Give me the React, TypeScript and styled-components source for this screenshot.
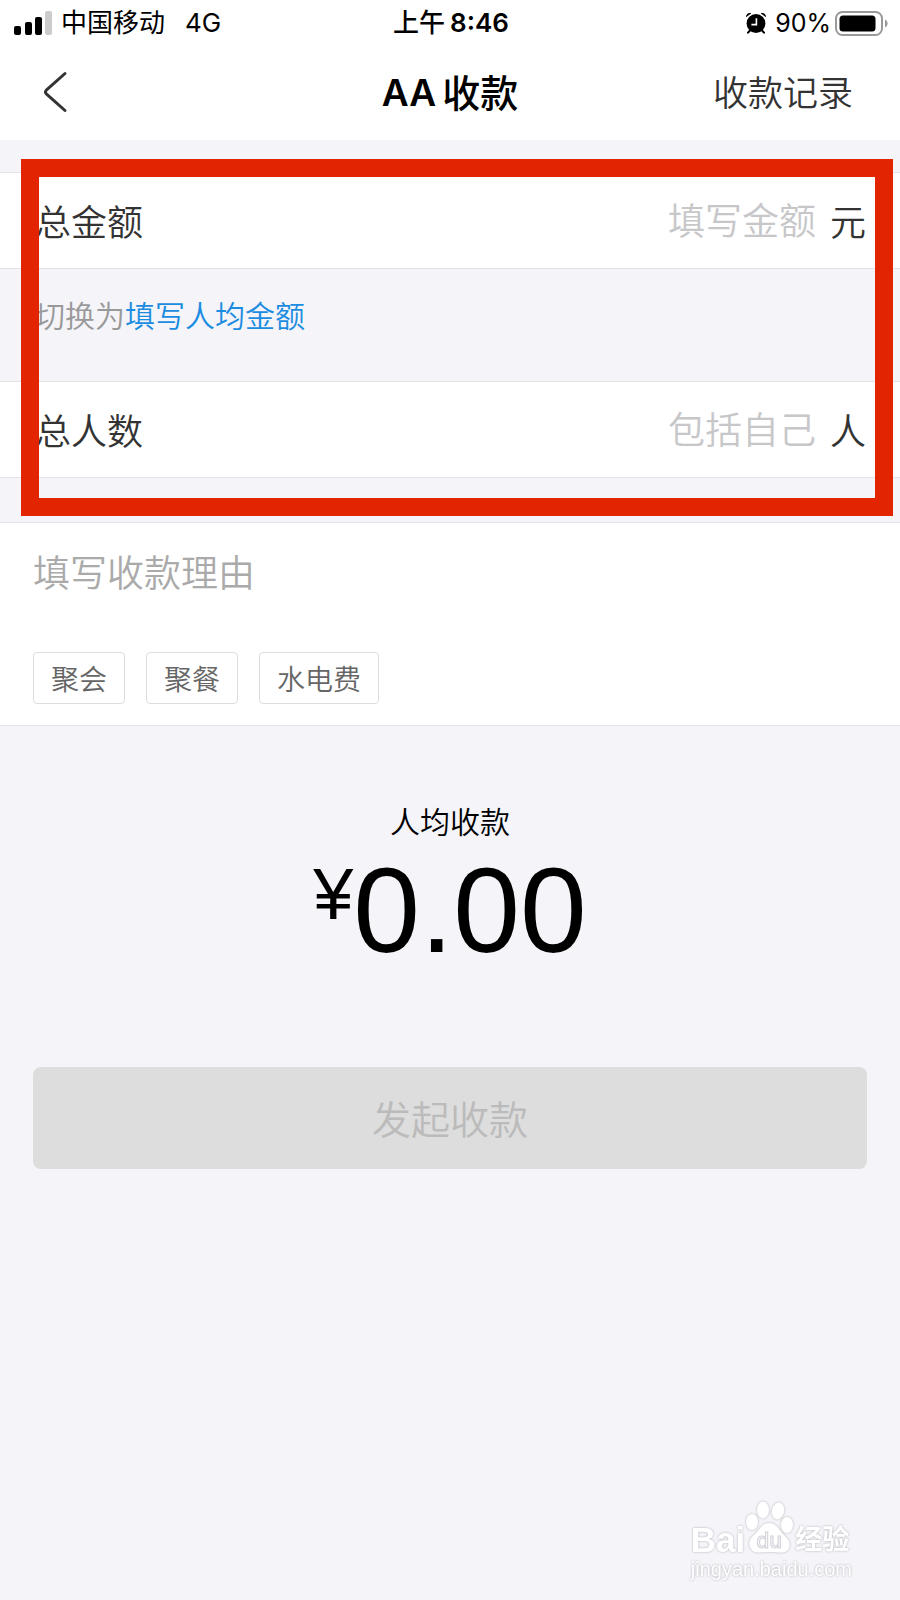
import React, { useState } from "react";
import styled, { createGlobalStyle } from "styled-components";

const GlobalStyle = createGlobalStyle`
  *, *::before, *::after { box-sizing: border-box; }
  body {
    margin: 0;
    background: #f4f4f9;
    color: #000;
    font-family: Inter, "Noto Sans CJK SC", sans-serif;
  }
  button, input, textarea { font: inherit; color: inherit; }
`;

const Page = styled.div`
  position: relative;
  display: flex;
  flex-direction: column;
  min-height: 100vh;
  font-weight: 350;
`;

const StatusBar = styled.div`
  display: grid;
  grid-template-columns: 1fr auto 1fr;
  align-items: center;
  height: 46px;
  padding: 0 12px 0 14px;
  background: #fff;
  font-size: 26px;
  font-weight: 400;
  line-height: 40px;
`;

const StatusGroup = styled.div<{ $end?: boolean }>`
  display: flex;
  align-items: center;
  justify-content: ${(p) => (p.$end ? "flex-end" : "flex-start")};
`;

const Carrier = styled.span`
  margin: 0 20px 0 9px;
`;

const Clock = styled.span`
  display: flex;
  gap: 5px;
  font-weight: 500;
`;

const ClockTime = styled.span`
  font-weight: 600;
`;

const BatteryLevel = styled.span`
  margin: 0 4px 0 9px;
  font-size: 25px;
`;

const Header = styled.header`
  display: grid;
  grid-template-columns: 1fr auto 1fr;
  align-items: center;
  height: 94px;
  padding: 0 43px;
  background: #fff;
`;

const BackButton = styled.button`
  justify-self: start;
  display: flex;
  padding: 0 0 2px;
  border: 0;
  background: none;
`;

const Title = styled.h1`
  display: flex;
  gap: 6px;
  margin: 0;
  font-size: 38px;
  font-weight: 500;
  line-height: 56px;
`;

const TitleLatin = styled.span`
  font-size: 37px;
  font-weight: 600;
`;

const HeaderLink = styled.a`
  justify-self: end;
  padding-right: 4px;
  color: #333;
  font-size: 35px;
  line-height: 56px;
  text-decoration: none;
`;

const Fields = styled.section`
  position: relative;
  padding: 32px 0 44px;
`;

const Highlight = styled.div`
  position: absolute;
  inset: 19px 7px 6px 21px;
  border: 18px solid #e22400;
  pointer-events: none;
`;

const FieldRow = styled.div`
  display: flex;
  align-items: center;
  height: 97px;
  padding: 4px 34px 0 35px;
  border: solid #e2e2e5;
  border-width: 1px 0;
  background: #fff;
  color: #333;
  font-size: 36px;
  line-height: 56px;
`;

const FieldInput = styled.input`
  flex: 1;
  min-width: 0;
  height: 60px;
  margin: 0 14px;
  padding: 0 0 2px;
  border: 0;
  outline: 0;
  background: none;
  font-size: 37px;
  text-align: right;
  &::placeholder { color: #c7c7c9; opacity: 1; }
`;

const SwitchHint = styled.p`
  margin: 0;
  padding: 27px 33px 45px 35px;
  color: #999;
  font-size: 30px;
  line-height: 40px;
`;

const SwitchButton = styled.button`
  padding: 0;
  border: 0;
  background: none;
  color: #1b8ce0;
`;

const Reason = styled.section`
  padding: 26px 33px 21px;
  border: solid #e2e2e5;
  border-width: 1px 0;
  background: #fff;
`;

const ReasonInput = styled.textarea`
  display: block;
  width: 100%;
  margin: 0 0 3px;
  padding: 0;
  border: 0;
  outline: 0;
  resize: none;
  background: none;
  font-size: 37px;
  line-height: 50px;
  &::placeholder { color: #aaa; opacity: 1; }
`;

const Tags = styled.div`
  display: flex;
  gap: 21px;
`;

const Tag = styled.button`
  height: 52px;
  padding: 3px 17px 0;
  border: 1px solid #ddd;
  border-radius: 4px;
  background: #fff;
  color: #666;
  font-size: 28px;
  line-height: 46px;
`;

const Summary = styled.section`
  display: flex;
  flex-direction: column;
  align-items: center;
  padding-top: 76px;
`;

const SummaryLabel = styled.div`
  font-size: 30px;
  line-height: 40px;
`;

const Amount = styled.div`
  display: flex;
  align-items: flex-start;
  margin-top: 8px;
  font-family: "Liberation Sans", Arial, sans-serif;
  font-size: 120px;
  line-height: 120px;
`;

const Currency = styled.span`
  font-size: 72px;
  line-height: 88px;
`;

const Submit = styled.button`
  height: 102px;
  margin: 97px 33px 0;
  padding: 4px 0 0;
  border: 0;
  border-radius: 8px;
  background: #ddd;
  color: #bbb;
  font-size: 39px;
  line-height: 56px;
`;

const Watermark = styled.div`
  position: absolute;
  right: 48px;
  bottom: 17px;
  color: #fff;
  filter: drop-shadow(0 0 1px #b0b0b6);
  pointer-events: none;
`;

const WatermarkLogo = styled.div`
  display: flex;
  align-items: flex-end;
  font-size: 27px;
  font-weight: 700;
  line-height: 30px;
`;

const WatermarkLatin = styled.span`
  font-family: "Liberation Sans", Arial, sans-serif;
  font-size: 35px;
`;

const WatermarkUrl = styled.div`
  font-family: "Liberation Sans", Arial, sans-serif;
  font-size: 20px;
  font-weight: 400;
  line-height: 28px;
`;

const SignalIcon = () => (
  <svg width="38" height="24" viewBox="0 0 38 24" aria-hidden="true">
    <rect x="0" y="15" width="7" height="9" rx="2" />
    <rect x="11" y="11" width="7" height="13" rx="2" />
    <rect x="21" y="6" width="7" height="18" rx="2" />
    <rect x="31" y="0" width="7" height="24" rx="2" fill="#cbcbcb" />
  </svg>
);

const AlarmIcon = () => (
  <svg width="20" height="22" viewBox="0 0 20 22" aria-hidden="true">
    <circle cx="10" cy="11.500" r="9.400" />
    <path d="M0 5.300C-.2 2 2.400 .2 5.400 1.200zM20 5.300C20.200 2 17.600 .2 14.600 1.200z" />
    <path d="M4 18.500l-2 2.200M16 18.500l2 2.200" stroke="#000" strokeWidth="2" strokeLinecap="round" />
    <path d="M10.400 6.200v6.400H5.400" stroke="#fff" strokeWidth="1.600" fill="none" />
  </svg>
);

const BatteryIcon = () => (
  <svg width="53" height="25" viewBox="0 0 53 25" aria-hidden="true">
    <rect x="1" y="1" width="46" height="23" rx="6.500" fill="none" stroke="#999" strokeWidth="2" />
    <rect x="4.500" y="4.500" width="36" height="16" rx="3.500" />
    <path d="M50 8.500c3.400 1.400 3.400 6.600 0 8z" fill="#999" />
  </svg>
);

const BackIcon = () => (
  <svg width="26" height="42" viewBox="0 0 26 42" fill="none" aria-hidden="true">
    <path
      d="M22 2.500L3.300 19.200Q1.500 21 3.300 22.800L22 39.500"
      stroke="#333"
      strokeWidth="3"
      strokeLinecap="round"
      strokeLinejoin="round"
    />
  </svg>
);

const PawIcon = () => (
  <svg width="50" height="54" viewBox="0 0 50 54" fill="#fff" aria-hidden="true">
    <ellipse cx="7" cy="21" rx="6" ry="8" />
    <ellipse cx="18" cy="9" rx="6" ry="8.500" />
    <ellipse cx="33" cy="10" rx="6.200" ry="8.500" transform="rotate(12 33 10)" />
    <ellipse cx="42" cy="24" rx="6" ry="8" />
    <path d="M24 22c-8 0-9 7-14 11-5 4-7 8-5 13 3 8 11 5 20 5s16 3 19-4c2-6-1-9-5-13-5-5-7-12-15-12z" />
    <text
      x="24"
      y="47"
      textAnchor="middle"
      fontFamily="Inter, sans-serif"
      fontSize="21"
      fontWeight="500"
      fill="#f4f4f9"
      stroke="#d2d2d8"
      strokeWidth="1"
    >
      du
    </text>
  </svg>
);

const tags = ["聚会", "聚餐", "水电费"];

export default function App() {
  const [total, setTotal] = useState("");
  const [people, setPeople] = useState("");
  const [reason, setReason] = useState("");

  return (
    <>
      <GlobalStyle />
      <Page>
        <StatusBar>
          <StatusGroup>
            <SignalIcon />
            <Carrier>中国移动</Carrier>
            <span>4G</span>
          </StatusGroup>
          <Clock>
            <span>上午</span>
            <ClockTime>8:46</ClockTime>
          </Clock>
          <StatusGroup $end>
            <AlarmIcon />
            <BatteryLevel>90%</BatteryLevel>
            <BatteryIcon />
          </StatusGroup>
        </StatusBar>
        <Header>
          <BackButton type="button" aria-label="返回">
            <BackIcon />
          </BackButton>
          <Title>
            <TitleLatin>AA</TitleLatin>
            <span>收款</span>
          </Title>
          <HeaderLink href="#records">收款记录</HeaderLink>
        </Header>

        <Fields>
          <FieldRow>
            <label htmlFor="total">总金额</label>
            <FieldInput id="total" placeholder="填写金额" value={total} onChange={(e) => setTotal(e.target.value)} />
            <span>元</span>
          </FieldRow>
          <SwitchHint>
            切换为<SwitchButton type="button">填写人均金额</SwitchButton>
          </SwitchHint>
          <FieldRow>
            <label htmlFor="people">总人数</label>
            <FieldInput id="people" placeholder="包括自己" value={people} onChange={(e) => setPeople(e.target.value)} />
            <span>人</span>
          </FieldRow>
          <Highlight />
        </Fields>

        <Reason>
          <ReasonInput
            rows={2}
            aria-label="收款理由"
            placeholder="填写收款理由"
            value={reason}
            onChange={(e) => setReason(e.target.value)}
          />
          <Tags>
            {tags.map((tag) => (
              <Tag key={tag} type="button" onClick={() => setReason(tag)}>
                {tag}
              </Tag>
            ))}
          </Tags>
        </Reason>

        <Summary>
          <SummaryLabel>人均收款</SummaryLabel>
          <Amount>
            <Currency>¥</Currency>
            <span>0.00</span>
          </Amount>
        </Summary>
        <Submit type="button" disabled>
          发起收款
        </Submit>

        <Watermark>
          <WatermarkLogo>
            <WatermarkLatin>Bai</WatermarkLatin>
            <PawIcon />
            <span>经验</span>
          </WatermarkLogo>
          <WatermarkUrl>jingyan.baidu.com</WatermarkUrl>
        </Watermark>
      </Page>
    </>
  );
}
